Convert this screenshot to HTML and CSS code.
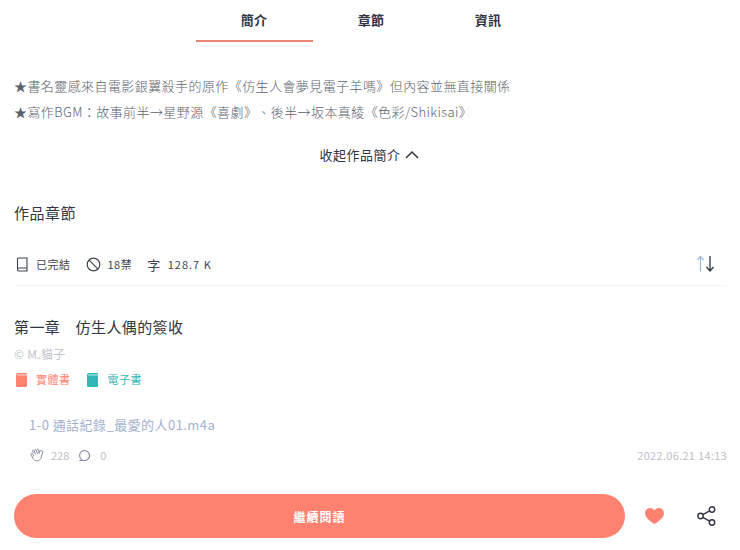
FILE: index.html
```html
<!DOCTYPE html>
<html lang="zh-Hant">
<head>
<meta charset="utf-8">
<title>作品簡介</title>
<link rel="stylesheet" href="styles.css">
</head>
<body>
<nav class="tabs">
  <a class="tab active">簡介</a>
  <a class="tab">章節</a>
  <a class="tab">資訊</a>
</nav>
<section class="intro">
  <p>★書名靈感來自電影銀翼殺手的原作《仿生人會夢見電子羊嗎》但內容並無直接關係</p>
  <p>★寫作BGM：故事前半→星野源《喜劇》、後半→坂本真綾《色彩/Shikisai》</p>
</section>
<div class="collapse">
  <span>收起作品簡介</span>
  <svg width="14" height="9" viewBox="0 0 14 9"><path d="M1 8l6-6 6 6" fill="none" stroke="#2f3542" stroke-width="1.5"/></svg>
</div>
<h2 class="section-title">作品章節</h2>
<div class="meta">
  <div class="meta-items">
    <span class="meta-item">
      <svg width="12" height="15" viewBox="0 0 12 15"><path d="M1.500 12V2.200C1.500 1.500 2 1 2.700 1H11v13H3a1.500 1.500 0 0 1-1.500-1.500C1.500 11.600 2.200 11 3 11h8" fill="none" stroke="#3c4350" stroke-width="1.100"/></svg>
      <span>已完結</span>
    </span>
    <span class="meta-item">
      <svg width="15" height="15" viewBox="0 0 15 15"><circle cx="7.500" cy="7.500" r="6.300" fill="none" stroke="#3c4350" stroke-width="1.200"/><path d="M3.200 3.200l8.600 8.600" stroke="#3c4350" stroke-width="1.200"/></svg>
      <span>18禁</span>
    </span>
    <span class="meta-item">
      <span class="char-icon">字</span>
      <span class="count">128.7 K</span>
    </span>
  </div>
  <svg class="sort" width="20" height="18" viewBox="0 0 20 18"><path d="M5.500 16.500V2M2.500 5L5.500 1.500 8.500 5" fill="none" stroke="#9dbbdc" stroke-width="1.200"/><path d="M15 1v15M11.500 12l3.500 4 3.500-4" fill="none" stroke="#2f3542" stroke-width="1.300"/></svg>
</div>
<section class="chapter">
  <h3 class="chapter-title">第一章　仿生人偶的簽收</h3>
  <div class="author">© M.貓子</div>
  <div class="formats">
    <span class="format paper">
      <svg width="11" height="14" viewBox="0 0 11 14"><path d="M2 0h8a1 1 0 0 1 1 1v12a1 1 0 0 1-1 1H1.500A1.500 1.500 0 0 1 0 12.500V2a2 2 0 0 1 2-2z" fill="#ff8170"/><path d="M1 2h10" stroke="#fff" stroke-width=".7"/></svg>
      <span>實體書</span>
    </span>
    <span class="format ebook">
      <svg width="11" height="14" viewBox="0 0 11 14"><path d="M2 0h8a1 1 0 0 1 1 1v12a1 1 0 0 1-1 1H1.500A1.500 1.500 0 0 1 0 12.500V2a2 2 0 0 1 2-2z" fill="#2fb8b4"/><path d="M1 2h10" stroke="#fff" stroke-width=".7"/></svg>
      <span>電子書</span>
    </span>
  </div>
  <div class="entry-title">1-0 通話紀錄_最愛的人01.m4a</div>
  <div class="entry-meta">
    <div class="stats">
      <svg width="14" height="14" viewBox="0 0 14 14"><g fill="none" stroke="#8f95a0" stroke-width="1" stroke-linecap="round" stroke-linejoin="round"><path d="M2 8.500L1 6.200c-.4-1 1-1.700 1.500-.7L3.800 8M3.500 5L2.600 3.300c-.5-1 1-1.700 1.500-.8L5.500 6M4.600 2.800c-.4-1.100 1.200-1.700 1.700-.6L7.500 5.500M6.700 1.800c0-1.100 1.600-1.100 1.800 0L9.300 5.200"/><path d="M9 5l.5-2c.3-1 1.800-.6 1.600.5l.1-.4c.4-.9 1.800-.3 1.500.7L11.600 8c-.3 2.800-2 4.800-4.300 4.800-2 0-3.300-.9-4.300-2.300L2 8.500"/></g></svg>
      <span class="stat-num">228</span>
      <svg class="bubble" width="12" height="13" viewBox="0 0 12 13"><path d="M2.700 10.600A5 5 0 1 1 6 11.500H1.300z" fill="none" stroke="#7f8794" stroke-width="1.100"/></svg>
      <span class="stat-num">0</span>
    </div>
    <time class="date">2022.06.21 14:13</time>
  </div>
</section>
<footer class="actions">
  <button class="read">繼續閱讀</button>
  <svg class="heart" width="19" height="16" viewBox="0 0 20 17"><path d="M10 17C4 13 0 10 0 5.500 0 2.300 2.400 0 5.200 0 7.200 0 9 1 10 2.500 11 1 12.800 0 14.800 0 17.600 0 20 2.300 20 5.500 20 10 16 13 10 17z" fill="#ff8170"/></svg>
  <svg class="share" width="19" height="20" viewBox="0 0 19 20"><g fill="none" stroke="#2f3542" stroke-width="1.400"><circle cx="3.500" cy="10" r="2.700"/><circle cx="15" cy="3.500" r="2.700"/><circle cx="15" cy="16.500" r="2.700"/><path d="M5.900 8.700l6.700-3.900M5.900 11.300l6.700 3.900"/></g></svg>
</footer>
</body>
</html>
```

FILE: styles.css
```css
* { box-sizing: border-box; }
html, body { margin: 0; padding: 0; }
body {
  width: 740px;
  height: 550px;
  overflow: hidden;
  background: #fff;
  color: #2f3542;
  font-family: "Noto Sans CJK TC", "Noto Sans", sans-serif;
  text-spacing-trim: space-all;
}
.tabs {
  display: flex;
  justify-content: center;
  padding-left: 3px;
  height: 42px;
}
.tab {
  width: 117px;
  height: 42px;
  padding-top: 11px;
  padding-right: 1px;
  text-align: center;
  font-size: 13px;
  line-height: 18px;
  font-weight: 700;
  letter-spacing: 0.3px;
  color: #2f3542;
}
.tab.active { border-bottom: 2px solid #ec8473; }
.intro {
  padding: 31px 14px 0;
  color: #5b626e;
  font-size: 13px;
  font-weight: 300;
  letter-spacing: 0.42px;
}
.intro p { margin: 0; line-height: 26px; }
.collapse {
  display: flex;
  justify-content: center;
  align-items: center;
  gap: 4px;
  margin-top: 19px;
  padding-right: 2px;
  height: 20px;
  font-size: 13px;
  letter-spacing: 0.5px;
  color: #2f3542;
}
.section-title {
  margin: 39px 14px 0;
  font-size: 15px;
  line-height: 20px;
  font-weight: 400;
  letter-spacing: 0.5px;
}
.meta {
  display: flex;
  justify-content: space-between;
  align-items: center;
  margin: 30px 14px 0;
  padding: 0 11px 10px 2px;
  height: 33px;
  border-bottom: 1px solid #f2f3f5;
}
.meta-items { display: flex; align-items: center; gap: 15px; }
.meta-item {
  display: flex;
  align-items: center;
  gap: 7px;
  font-size: 11px;
  color: #3c4350;
  letter-spacing: 0.5px;
}
.meta-item:first-child { gap: 8px; }
.char-icon { font-size: 13px; }
.count { letter-spacing: 1px; }
.chapter { padding: 31px 13px 0 14px; }
.chapter-title {
  margin: 0;
  font-size: 15px;
  line-height: 20px;
  font-weight: 400;
  letter-spacing: 0.4px;
}
.author {
  margin-top: 9px;
  font-size: 12px;
  line-height: 16px;
  letter-spacing: 0.3px;
  color: #c2c5ca;
}
.formats { display: flex; gap: 16px; margin-top: 10px; padding-left: 2px; }
.format {
  display: flex;
  align-items: center;
  gap: 9px;
  font-size: 11px;
  line-height: 15px;
  letter-spacing: 0.5px;
}
.ebook svg + span { margin-left: 1px; }
.paper { color: #ff8170; }
.ebook { color: #2fb8b4; }
.entry-title {
  margin-top: 28px;
  padding-left: 15px;
  font-size: 13px;
  line-height: 20px;
  letter-spacing: 0.45px;
  color: #a3b1cd;
}
.entry-meta {
  display: flex;
  justify-content: space-between;
  align-items: center;
  margin-top: 12px;
  padding-left: 16px;
  font-size: 11px;
  line-height: 16px;
  color: #bcc0c6;
}
.stats { display: flex; align-items: center; gap: 7px; }
.bubble { margin-left: 3px; margin-right: 2px; }
.date { letter-spacing: 0.3px; }
.actions {
  display: flex;
  align-items: center;
  margin-top: 31px;
  padding-left: 14px;
}
.read {
  width: 611px;
  height: 44px;
  border: 0;
  border-radius: 22px;
  background: #ff8170;
  color: #fff;
  font: 700 12px "Noto Sans CJK TC", "Noto Sans", sans-serif;
  letter-spacing: 1px;
}
.heart { margin-left: 20px; }
.share { margin-left: 33px; }
```
